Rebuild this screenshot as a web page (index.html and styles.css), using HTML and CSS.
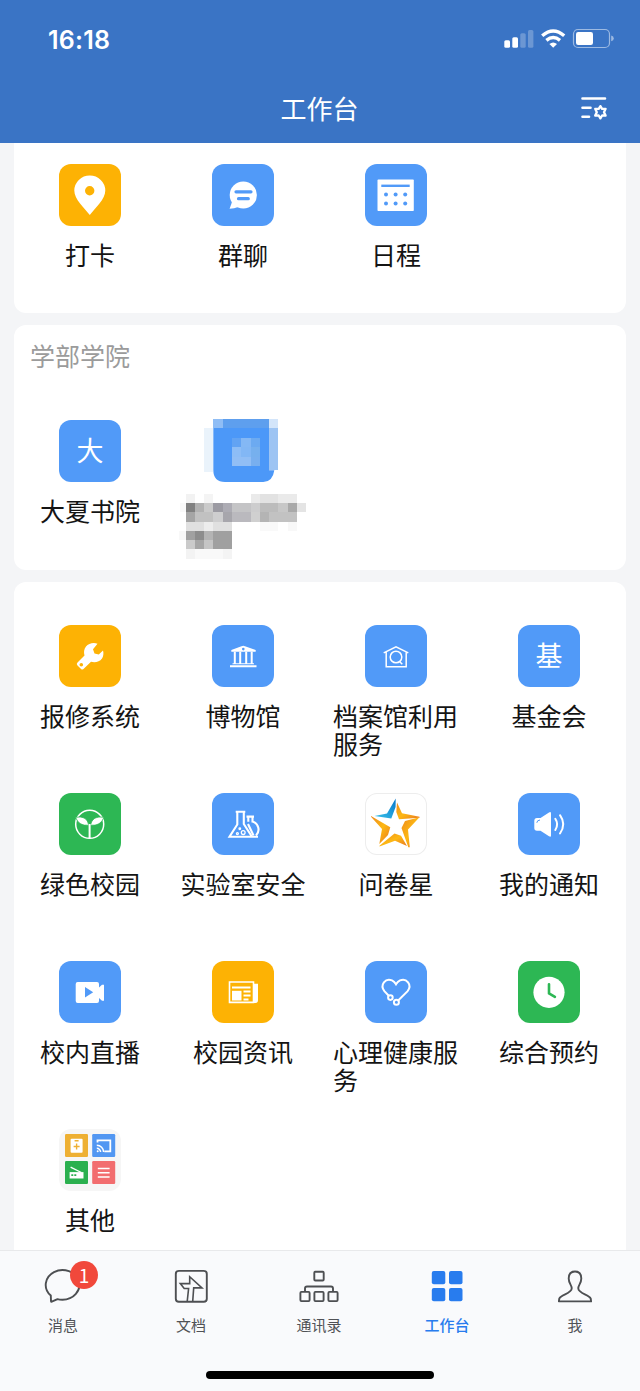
FILE: index.html
```html
<!DOCTYPE html>
<html lang="zh-CN">
<head>
<meta charset="utf-8">
<title>工作台</title>
<link rel="stylesheet" href="styles.css">
</head>
<body>
<div class="phone">
  <header class="header">
    <div class="status">
      <span class="time">16:18</span>
      <svg class="status-icons" width="112" height="24" viewBox="503 27 112 24">
        <g fill="#fff">
          <rect x="504.3" y="40.3" width="5.7" height="7.4" rx="1.5"/>
          <rect x="512.3" y="37.3" width="5.7" height="10.4" rx="1.5"/>
          <g opacity=".25"><rect x="520.3" y="33.3" width="5.4" height="14.4" rx="1.5"/><rect x="528" y="30" width="5.4" height="17.7" rx="1.5"/></g>
          <path d="M553.2 47.8l-3.8-3.8q3.8-3 7.6 0z"/>
          <rect x="576" y="32" width="17" height="13" rx="2.2"/>
          <path d="M611.2 35.6q2.6.8 2.6 2.8t-2.6 2.8z" opacity=".5"/>
        </g>
        <path d="M542.2 35.8q11-9.6 22 0M546.4 40.4q6.8-5.6 13.6 0" fill="none" stroke="#fff" stroke-width="3.4"/>
        <rect x="573.5" y="29.5" width="36" height="18" rx="4.5" fill="none" stroke="#fff" stroke-opacity=".5" stroke-width="1.2"/>
      </svg>
    </div>
    <div class="titlebar">
      <h1 class="title">工作台</h1>
      <svg class="settings" width="30" height="28" viewBox="579 95 30 28" fill="none" stroke="#fff" stroke-linecap="round">
        <path d="M582.5 98.500H605M582.500 107.700H590.500M582.500 116.700H589" stroke-width="2.600"/>
        <path d="M600.400 106.100l1.700 2.800 3.500-.1-1.600 3.400 1.600 3.400-3.500-.1-1.700 2.900-1.700-2.900-3.500.1 1.600-3.400-1.600-3.400 3.500.1z" stroke-width="2.300" stroke-linejoin="round"/>
      </svg>
    </div>
  </header>

  <main class="content">
    <section class="card card-top">
      <div class="grid">
        <div class="app"><div class="icon yellow"><svg viewBox="0 0 62 62"><path fill="#fff" fill-rule="evenodd" d="M30.8 51C25 43.5 15.3 35.5 15.3 26.5A15.5 15 0 0 1 46.3 26.5C46.3 35.5 36.5 43.5 30.8 51zM30.7 22a4.7 4.7 0 1 0 0 9.4 4.7 4.7 0 0 0 0-9.4z"/></svg></div><span class="label">打卡</span></div>
        <div class="app"><div class="icon blue"><svg viewBox="0 0 62 62"><circle cx="31.3" cy="31" r="13.6" fill="#fff"/><path d="M20 38l-2.4 6.7q4.400 0 9.400-2z" fill="#fff"/><path d="M24 27.800H39M26.500 34.700H36.300" stroke="#519af8" stroke-width="3.200" stroke-linecap="round"/></svg></div><span class="label">群聊</span></div>
        <div class="app"><div class="icon blue"><svg viewBox="0 0 62 62"><rect x="12.500" y="15.600" width="36.300" height="31.500" rx=".8" fill="#fff"/><g fill="#519af8"><rect x="16.300" y="20.600" width="28.400" height="2.400"/><circle cx="21" cy="30.400" r="2"/><circle cx="30.600" cy="30.400" r="2"/><circle cx="40.200" cy="30.400" r="2"/><circle cx="21" cy="39.400" r="2"/><circle cx="30.600" cy="39.400" r="2"/><circle cx="40.200" cy="39.400" r="2"/></g></svg></div><span class="label">日程</span></div>
      </div>
    </section>

    <section class="card card-school">
      <h2 class="card-title">学部学院</h2>
      <div class="grid">
        <div class="app"><div class="icon blue glyph">大</div><span class="label">大夏书院</span></div>
        <div class="app">
          <svg class="masked" viewBox="501 330 459 423" shape-rendering="crispEdges">
            <rect x="612" y="355" width="28" height="132" fill="#eaf3fb"/>
            <path d="M640 350H807V481H823Q818 516 790 516H675Q640 516 640 480z" fill="#4c98f8" shape-rendering="auto"/>
            <rect x="640" y="327" width="167" height="28" fill="#5e9fee"/>
            <rect x="640" y="327" width="28" height="28" fill="#8fbdf5"/>
            <rect x="807" y="327" width="28" height="28" fill="#d3e5fa"/>
            <rect x="807" y="355" width="28" height="126" fill="#9dc4f3"/>
            <rect x="696" y="384" width="28" height="28" fill="#62a3f3"/><rect x="724" y="384" width="28" height="28" fill="#84b8f5"/><rect x="752" y="384" width="27" height="28" fill="#6caaf1"/>
            <rect x="696" y="412" width="28" height="28" fill="#8dbdf6"/><rect x="724" y="412" width="28" height="28" fill="#82b7f5"/><rect x="752" y="412" width="27" height="28" fill="#76b0ee"/>
            <rect x="696" y="440" width="56" height="28" fill="#91bef5"/><rect x="752" y="440" width="27" height="28" fill="#78afef"/>
            <rect x="557" y="551" width="28" height="28" fill="#f2f2f2"/><rect x="613" y="551" width="27" height="28" fill="#f4f4f4"/><rect x="752" y="551" width="139" height="28" fill="#eaeaea"/><rect x="780" y="551" width="55" height="28" fill="#e2e2e2"/>
            <rect x="540" y="579" width="17" height="28" fill="#f9f9f9"/><rect x="557" y="579" width="28" height="28" fill="#818181"/><rect x="585" y="579" width="28" height="28" fill="#b2b2b2"/><rect x="613" y="579" width="27" height="28" fill="#cacaca"/><rect x="640" y="579" width="28" height="28" fill="#9c9ba3"/><rect x="668" y="579" width="28" height="28" fill="#adacb4"/><rect x="696" y="579" width="56" height="28" fill="#c4c4c6"/><rect x="752" y="579" width="28" height="28" fill="#cdcdce"/><rect x="780" y="579" width="55" height="28" fill="#bcbcbc"/><rect x="835" y="579" width="28" height="28" fill="#c7c7c7"/><rect x="863" y="579" width="28" height="28" fill="#a9a9a9"/><rect x="891" y="579" width="27" height="28" fill="#e4e4e4"/>
            <rect x="557" y="607" width="28" height="28" fill="#a5a5a5"/><rect x="585" y="607" width="55" height="28" fill="#c1c1c1"/><rect x="640" y="607" width="28" height="28" fill="#cececf"/><rect x="668" y="607" width="28" height="28" fill="#a7a6ac"/><rect x="696" y="607" width="56" height="28" fill="#bab9be"/><rect x="752" y="607" width="28" height="28" fill="#d0d0d0"/><rect x="780" y="607" width="28" height="28" fill="#b4b4b4"/><rect x="808" y="607" width="83" height="28" fill="#c2c2c2"/>
            <rect x="557" y="635" width="139" height="28" fill="#e0e0e0"/><rect x="613" y="635" width="27" height="28" fill="#ededed"/><rect x="780" y="635" width="55" height="28" fill="#f9f9f9"/><rect x="863" y="635" width="28" height="28" fill="#f8f8f8"/>
            <rect x="537" y="663" width="20" height="28" fill="#f8f8f8"/><rect x="557" y="663" width="28" height="28" fill="#a1a1a1"/><rect x="585" y="663" width="28" height="28" fill="#8d8d8d"/><rect x="613" y="663" width="27" height="28" fill="#b4b4b4"/><rect x="640" y="663" width="56" height="55" fill="#a0a0a0"/>
            <rect x="557" y="691" width="28" height="27" fill="#cacaca"/><rect x="585" y="691" width="28" height="27" fill="#a6a6a6"/><rect x="613" y="691" width="27" height="27" fill="#c5c5c5"/>
            <rect x="557" y="718" width="28" height="28" fill="#f3f3f3"/><rect x="585" y="718" width="83" height="28" fill="#f9f9f9"/><rect x="668" y="718" width="28" height="28" fill="#f4f4f4"/>
          </svg>
        </div>
      </div>
    </section>

    <section class="card card-apps">
      <div class="grid">
        <div class="app"><div class="icon yellow"><svg viewBox="0 0 62 62"><path fill="#fff" fill-rule="evenodd" d="M38.500 18.800C34.500 17 29.500 18.500 27 21.500C25 24 24.500 27 25.500 30.500L18.500 37.500Q17 39 18.500 40.600L22.300 44.200Q23.800 45 25 43.600L32 36.800C36 38 40.500 37 43 33.500C44.500 31.200 44.800 28 44 25.500L39.800 29.400L35.500 28.600L34 24.300zM22.300 37.900a1.800 1.800 0 1 0 0 3.600 1.800 1.800 0 0 0 0-3.600z"/></svg></div><span class="label">报修系统</span></div>
        <div class="app"><div class="icon blue"><svg viewBox="0 0 62 62"><g fill="#fff"><path fill-rule="evenodd" d="M19.300 26.800V25L29.500 21.200Q31.300 20.500 33 21.200L43.700 25V26.800zM31.300 22.800a1.300 1.300 0 1 0 0 2.600 1.300 1.300 0 0 0 0-2.600z"/><path d="M21.800 26.800h2v11.800h-2zM27.200 26.800h2v11.800h-2zM33.200 26.800h2v11.800h-2zM38.700 26.800h2v11.800h-2zM18 40.300h26.500v2H18zM20.500 38.300h21.500v1H20.500z"/></g></svg></div><span class="label">博物馆</span></div>
        <div class="app"><div class="icon blue"><svg viewBox="0 0 62 62" fill="none" stroke="#fff" stroke-width="1.500"><path d="M18.700 27.900L31 21.800 43.300 27.900M21.200 27.300V41.800H41.200V27.300"/><circle cx="31" cy="32" r="5.800"/><path d="M34.500 36.500L37.300 39.300"/></svg></div><span class="label">档案馆利用服务</span></div>
        <div class="app"><div class="icon blue glyph">基</div><span class="label">基金会</span></div>

        <div class="app"><div class="icon green"><svg viewBox="0 0 62 62"><circle cx="30.700" cy="31.300" r="14" fill="none" stroke="#fff" stroke-width="1.500"/><g stroke="#2db754" stroke-width=".8" fill="#fff"><path d="M16.500 24.300Q28 22 29.800 32.200Q20 33.500 16.500 24.300zM45 24.300Q33.500 22 31.400 32.200Q41.500 33.500 45 24.300z"/></g><path d="M30.600 31V45.500" stroke="#fff" stroke-width="2"/></svg></div><span class="label">绿色校园</span></div>
        <div class="app"><div class="icon blue"><svg viewBox="0 0 62 62" fill="none" stroke="#fff" stroke-width="2.100"><path d="M34.500 23.600H42M36.300 24V28.800M40.500 24V28.600A8.300 8.300 0 0 1 44 42.500"/><path d="M23.700 18.800H33.300M25.300 19V31.500L17.500 43.800H46M31.800 19V31L39.800 43.500"/><path d="M36 31L41.500 42.500"/><circle cx="31.200" cy="39.600" r="1.900" stroke-width="1.300"/><circle cx="25.400" cy="40.600" r="1" stroke-width="1.300"/><circle cx="27.800" cy="35.800" r=".8" stroke-width="1.300"/></svg></div><span class="label">实验室安全</span></div>
        <div class="app"><div class="icon white"><svg viewBox="0 0 62 62">
          <defs><linearGradient id="flame" x1="0" y1="0" x2="1" y2="1"><stop offset="0" stop-color="#ee8a1c"/><stop offset=".5" stop-color="#fdb813"/><stop offset="1" stop-color="#e97721"/></linearGradient><linearGradient id="sky" x1="0" y1="1" x2="1" y2="0"><stop offset="0" stop-color="#3bc4e9"/><stop offset="1" stop-color="#0878cc"/></linearGradient></defs>
          <path d="M30.700 5.500L22 20.500 9.500 22.900 26.300 25.600 30.600 14z" fill="url(#sky)"/>
          <g fill="url(#flame)"><path d="M32 9.500L37 20.300 54.500 23.800 54.500 24.800 34 26.200 31.300 19z"/><path d="M54.500 24.300L43 36.500 44.800 54.300 43.300 54.300 36.500 35 40 28z"/><path d="M42 53L30 47.800 14.500 53.500 14.500 52.800 29.500 40.400 36 42.800z"/><path d="M14.300 51L17 36 6 23.800 6 23 25.300 34.300 23 42z"/></g>
        </svg></div><span class="label">问卷星</span></div>
        <div class="app"><div class="icon blue"><svg viewBox="0 0 62 62"><path d="M19 25H22.500L31 19.400Q33 18.300 33 20.400V42.400Q33 44.400 31 43.200L22.500 37.800H19Q16.300 37.800 16.300 35V28Q16.300 25 19 25z" fill="#fff"/><path d="M18.800 29.800Q19 27.200 22 27" stroke="#519af8" fill="none"/><path d="M37.300 25.800Q41 31.300 37.300 37M42 22.200Q48.500 31.300 42 40.500" fill="none" stroke="#fff" stroke-width="2" stroke-linecap="round"/></svg></div><span class="label">我的通知</span></div>

        <div class="app"><div class="icon blue"><svg viewBox="0 0 62 62"><path fill="#fff" fill-rule="evenodd" d="M18.700 21H38Q40 21 40 23V26.500L43 23.800H45V39.700H43L40 37V40Q40 42 38 42H18.700Q16.700 42 16.700 40V23Q16.700 21 18.700 21zM26 26V36.600L34.200 31.300z"/></svg></div><span class="label">校内直播</span></div>
        <div class="app"><div class="icon yellow"><svg viewBox="0 0 62 62"><path d="M17.500 21H41.500V41.400H17.500z" fill="none" stroke="#fff" stroke-width="1.600"/><path d="M42.300 22.800H46V39Q46 42 43.500 42H41V22.800z" fill="#fff"/><path d="M20 26.500H38.500M31.500 30.600H38.500M31.500 34.600H38.500M31.500 38.600H36.500" stroke="#fff" stroke-width="2"/><path d="M20 29.800h9.500v9.700H20z" fill="#fff"/></svg></div><span class="label">校园资讯</span></div>
        <div class="app"><div class="icon blue"><svg viewBox="0 0 62 62" fill="none" stroke="#fff" stroke-width="2"><path d="M23.700 34.800L19.400 30.200C14.500 24 20.500 16.700 27 19.400Q29.500 20.600 31 23.200Q32.500 20.600 35 19.400C41.500 16.700 47.500 24 42.600 30.200L33.400 39.200"/><circle cx="25.400" cy="36.600" r="2.300"/><circle cx="31.400" cy="41.200" r="2.500"/></svg></div><span class="label">心理健康服务</span></div>
        <div class="app"><div class="icon green"><svg viewBox="0 0 62 62"><circle cx="31" cy="31.300" r="15.600" fill="#fff"/><path d="M31 23.300V32.400L36.900 35.900" fill="none" stroke="#2db754" stroke-width="2.600" stroke-linecap="round" stroke-linejoin="round"/></svg></div><span class="label">综合预约</span></div>

        <div class="app"><div class="icon folder"><svg viewBox="0 0 62 62">
          <rect x="6" y="5" width="23" height="23" rx="1.200" fill="#eeb033"/><rect x="33.200" y="5" width="23" height="23" rx="1.200" fill="#5297f2"/><rect x="6" y="32" width="23" height="23" rx="1.200" fill="#2bb04f"/><rect x="33.200" y="32" width="23" height="23" rx="1.200" fill="#f26d6f"/>
          <g transform="translate(.3 -1.500)"><rect x="11.300" y="11.300" width="12" height="14" rx="1" fill="#fff"/><path d="M17.300 16V22M14.300 19H20.300M15.300 13.300H19.300" stroke="#eeb033" stroke-width="1.400"/>
          <path d="M38.200 15V12.800H51V23.800H45" fill="none" stroke="#fff" stroke-width="1.800"/><path d="M37.500 17.800a6.800 6.800 0 0 1 6.800 6.800M37.500 20.800a3.800 3.800 0 0 1 3.800 3.800" fill="none" stroke="#fff" stroke-width="1.500"/><circle cx="38.400" cy="23.800" r="1" fill="#fff"/>
          <path d="M11.300 39.600L22 45" stroke="#fff" stroke-width="1.400"/><path d="M10.300 44.600H24.200V51H10.300z" fill="#fff"/><path d="M12 47.600H14M15 47.600H17" stroke="#2bb04f" stroke-width="1.800"/>
          <path d="M38.500 41H50.300M38.500 45.200H50.300M38.500 49.500H50.300" stroke="#fff" stroke-width="1.600"/></g>
        </svg></div><span class="label">其他</span></div>
      </div>
    </section>
  </main>

  <footer class="footer">
    <nav class="tabs">
      <div class="tab"><div class="tab-icon"><svg width="40" height="36" viewBox="43 1268 40 36"><path d="M50.800 1295.500A16.800 14.800 0 1 1 62.500 1299.700Q59.500 1299.600 57.500 1299.100L51.800 1301.700Q51 1302 51 1301z" fill="none" stroke="#4d4f52" stroke-width="1.900" stroke-linejoin="round"/></svg><span class="badge">1</span></div><span>消息</span></div>
      <div class="tab"><div class="tab-icon"><svg width="40" height="36" viewBox="171.500 1268 40 36"><g fill="none" stroke="#4d4f52" stroke-width="1.900"><rect x="176.300" y="1270.900" width="31" height="30.800" rx="3"/><path d="M187.700 1301.500L189.100 1288.500H184.700L180.800 1283.600H190.200V1276.700L202.500 1287.900H194.200L193.200 1301.500" stroke-width="1.600"/></g></svg></div><span>文档</span></div>
      <div class="tab"><div class="tab-icon"><svg width="44" height="36" viewBox="297.500 1268 44 36"><g fill="none" stroke="#4d4f52" stroke-width="1.900"><rect x="314.800" y="1271.700" width="9.400" height="8.800" rx="1"/><path d="M305.500 1291V1288.500Q305.500 1286.500 307.500 1286.500H331.500Q333.500 1286.500 333.500 1288.500V1291"/><rect x="300.900" y="1291.900" width="9.200" height="9.200" rx="1"/><rect x="314.900" y="1291.900" width="9.200" height="9.200" rx="1"/><rect x="328.900" y="1291.900" width="9.200" height="9.200" rx="1"/></g></svg></div><span>通讯录</span></div>
      <div class="tab active"><div class="tab-icon"><svg width="40" height="36" viewBox="427.500 1268 40 36"><g fill="#287cee"><rect x="432.300" y="1271" width="13.500" height="13.300" rx="2"/><rect x="449.500" y="1271" width="13.500" height="13.300" rx="2"/><rect x="432.300" y="1288" width="13.500" height="13.300" rx="2"/><rect x="449.500" y="1288" width="13.500" height="13.300" rx="2"/></g></svg></div><span>工作台</span></div>
      <div class="tab"><div class="tab-icon"><svg width="40" height="36" viewBox="555 1268 40 36"><path d="M575 1271.500C570.800 1271.500 568.700 1274.200 568.700 1278.500C568.700 1283.500 571.900 1285 571.700 1288.500C571.500 1293.500 561 1294.500 559.300 1298.500L558.900 1301.400H591.100L590.700 1298.500C589 1294.500 578.500 1293.500 578.300 1288.500C578.100 1285 581.300 1283.500 581.300 1278.500C581.300 1274.200 579.200 1271.500 575 1271.500z" fill="none" stroke="#4d4f52" stroke-width="1.900" stroke-linejoin="round"/></svg></div><span>我</span></div>
    </nav>
    <div class="home-indicator"></div>
  </footer>
</div>
</body>
</html>
```

FILE: styles.css
```css
* { box-sizing: border-box; }

body {
  margin: 0;
  background: #f4f5f7;
  color: #141414;
  font-family: "Noto Sans CJK SC", "Noto Sans", sans-serif;
}

.phone {
  display: flex;
  flex-direction: column;
  width: 640px;
  height: 1391px;
  overflow: hidden;
}

.header {
  flex: none;
  height: 143px;
  background: #3a74c5;
  color: #fff;
}

.status {
  display: flex;
  justify-content: space-between;
  align-items: center;
  height: 78px;
  padding: 0 25px 0 48px;
}

.time {
  padding-top: 1px;
  font: 600 25px/30px Inter, "Noto Sans", sans-serif;
  letter-spacing: 0.2px;
}

.titlebar {
  display: grid;
  grid-template-columns: 1fr auto 1fr;
  align-items: center;
  height: 62px;
  padding-right: 31px;
  padding-left: 31px;
}

.title {
  grid-column: 2;
  margin: 0 1px 2px 0;
  font-size: 26px;
  font-weight: 400;
  line-height: 36px;
}

.settings { justify-self: end; }

.content {
  display: flex;
  flex: 1;
  flex-direction: column;
  gap: 12px;
  min-height: 0;
  padding: 0 14px;
  overflow: hidden;
}

.card {
  flex: none;
  border-radius: 12px;
  background: #fff;
}

.card-top {
  height: 170px;
  padding-top: 21px;
  border-radius: 0 0 12px 12px;
}

.card-school {
  height: 245px;
  padding-top: 12px;
}

.card-title {
  margin: 0 0 47px;
  padding-left: 16px;
  color: #9b9b9b;
  font-size: 25px;
  font-weight: 400;
  line-height: 36px;
}

.card-apps {
  height: 680px;
  padding-top: 43px;
}

.grid {
  display: grid;
  grid-template-columns: repeat(4, 153px);
  grid-auto-rows: 168px;
  margin-left: -0.5px;
}

.app {
  display: flex;
  flex-direction: column;
  align-items: center;
  gap: 14px;
}

.icon {
  flex: none;
  width: 62px;
  height: 62px;
  border-radius: 12px;
}

.icon svg { display: block; }
.blue { background: #519af8; }
.yellow { background: #fdb204; }
.green { background: #2db754; }
.white { background: #fff; box-shadow: inset 0 0 0 1px #ededed; }
.folder { background: #f6f6f6; }

.glyph {
  color: #fff;
  font-size: 27px;
  line-height: 60px;
  text-align: center;
}

.label {
  max-width: 126px;
  font-size: 25px;
  line-height: 28px;
}

.masked {
  width: 153px;
  height: 141px;
  overflow: visible;
}

.footer {
  display: flex;
  flex: none;
  flex-direction: column;
  align-items: center;
  height: 141px;
  border-top: 1px solid #e8e9eb;
  background: #f9fafc;
}

.tabs {
  display: grid;
  grid-template-columns: repeat(5, 128px);
  height: 120px;
  padding-top: 17px;
  margin-right: 2px;
}

.tab {
  display: flex;
  flex-direction: column;
  align-items: center;
  gap: 10px;
  color: #505256;
  font-size: 15px;
  line-height: 22px;
}

.tab-icon {
  position: relative;
  height: 36px;
}

.tab-icon svg { display: block; }

.active {
  color: #287cee;
  font-weight: 500;
}

.badge {
  position: absolute;
  top: -7px;
  right: -15px;
  width: 28px;
  height: 28px;
  border-radius: 50%;
  background: #f1483b;
  color: #fff;
  font-size: 19px;
  line-height: 27px;
  text-align: center;
}

.home-indicator {
  width: 228px;
  height: 8px;
  border-radius: 4px;
  background: #000;
}
```
